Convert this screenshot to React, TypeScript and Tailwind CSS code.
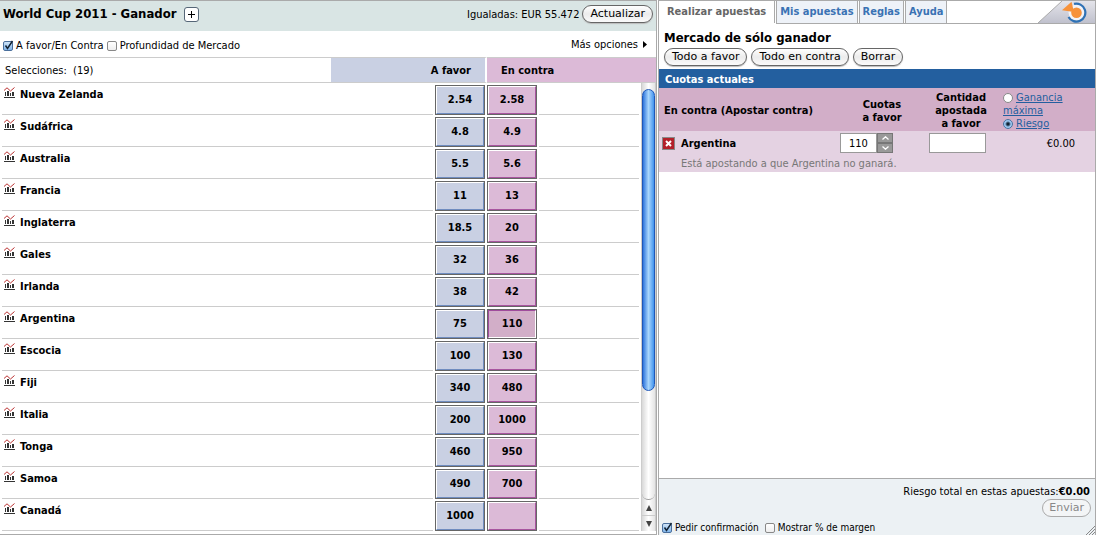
import { useState } from 'react';
import type { ReactNode } from 'react';
import clsx from 'clsx';

type Selection = { name: string; back: string; lay: string };

const selections: Selection[] = [
  { name: 'Nueva Zelanda', back: '2.54', lay: '2.58' },
  { name: 'Sudáfrica', back: '4.8', lay: '4.9' },
  { name: 'Australia', back: '5.5', lay: '5.6' },
  { name: 'Francia', back: '11', lay: '13' },
  { name: 'Inglaterra', back: '18.5', lay: '20' },
  { name: 'Gales', back: '32', lay: '36' },
  { name: 'Irlanda', back: '38', lay: '42' },
  { name: 'Argentina', back: '75', lay: '110' },
  { name: 'Escocia', back: '100', lay: '130' },
  { name: 'Fiji', back: '340', lay: '480' },
  { name: 'Italia', back: '200', lay: '1000' },
  { name: 'Tonga', back: '460', lay: '950' },
  { name: 'Samoa', back: '490', lay: '700' },
  { name: 'Canadá', back: '1000', lay: '' },
];

const tabs = ['Realizar apuestas', 'Mis apuestas', 'Reglas', 'Ayuda'];

function ChartIcon() {
  return (
    <svg width="12" height="12" viewBox="0 0 12 12" className="shrink-0" shapeRendering="crispEdges">
      <path d="M0 10h11v1H0zM1 5h1v4H1zM3 4h2v5H3zM6 6h1v3H6zM8 5h2v4H8z" fill="#333" />
      <path d="M0 3.500L3 .8L6.500 4L10.500 .5" stroke="#b33" fill="none" shapeRendering="auto" />
    </svg>
  );
}

function BrandCorner() {
  return (
    <svg width="57" height="22" viewBox="0 0 57 22" className="ml-auto shrink-0">
      <defs>
        <linearGradient id="corner" x1="0" y1="0" x2="0" y2="1">
          <stop offset="0" stopColor="#e4e4ea" />
          <stop offset="1" stopColor="#c0c1cd" />
        </linearGradient>
      </defs>
      <path d="M0 22L24 0H57V22Z" fill="url(#corner)" />
      <path d="M0 22L24 0" stroke="#aaa" />
      <circle cx="38.500" cy="11.500" r="8" fill="#f2f3f7" />
      <path d="M36 2.900A9 9 0 1 1 30.500 16" fill="none" stroke="#2f72b5" strokeWidth="2.200" />
      <circle cx="38.500" cy="11.700" r="5.300" fill="#f7923a" />
      <path d="M24 9.300L33.500 .8L36 11Z" fill="#f7923a" />
    </svg>
  );
}

function PillButton({ children, disabled }: { children: ReactNode; disabled?: boolean }) {
  return (
    <button
      disabled={disabled}
      className={clsx(
        "h-[18px] rounded-full border font-['DejaVu_Sans',sans-serif] text-[11px] leading-4",
        disabled
          ? 'border-[#aaa] bg-[#f3f5f6] px-[6px] text-[#888]'
          : 'border-[#666] bg-linear-to-b from-white via-[#ececec] to-[#fafafa] px-[7px] text-black shadow-[0_1px_1px_#bbb]',
      )}
    >
      {children}
    </button>
  );
}

function Check({ label, defaultChecked }: { label: string; defaultChecked?: boolean }) {
  return (
    <label className="flex items-center gap-[3px]">
      <span className="grid">
        <input
          type="checkbox"
          defaultChecked={defaultChecked}
          className="peer col-start-1 row-start-1 size-[10px] appearance-none rounded-[2px] border border-[#888] bg-linear-to-b from-white to-[#eee] checked:border-[#4a6f9c] checked:from-[#cfe4f7] checked:to-[#7fb4ea]"
        />
        <svg
          width="10"
          height="10"
          viewBox="0 0 10 10"
          className="pointer-events-none invisible col-start-1 row-start-1 overflow-visible peer-checked:visible"
        >
          <path d="M2.500 4.500L4.500 7.500L9.500 0" stroke="#123" strokeWidth="1.500" fill="none" />
        </svg>
      </span>
      {label}
    </label>
  );
}

function OddsButton({ value, side, selected }: { value: string; side: 'back' | 'lay'; selected?: boolean }) {
  return (
    <button
      aria-label={value ? undefined : 'Sin cuota'}
      className="block h-[30px] w-[50px] border border-[#666] bg-white font-bold"
    >
      <span
        className={clsx(
          'flex size-full items-center justify-center border',
          side === 'back' && 'border-t-white border-r-[#6f8cbf] border-b-[#6f8cbf] border-l-white bg-[#c9d0e3]',
          side === 'lay' && !selected && 'border-t-white border-r-[#a8559f] border-b-[#a8559f] border-l-white bg-[#dcbad7]',
          selected && 'border-t-[#a04c9c] border-r-white border-b-white border-l-[#a04c9c] bg-[#d2aec8]',
        )}
      >
        {value}
      </span>
    </button>
  );
}

function ScrollBar() {
  return (
    <div className="flex h-[448px] flex-col border-x border-[#ccc] bg-linear-to-r from-[#d8d8d8] via-white to-[#e4e4e4]">
      <div className="mt-[6px] h-[302px] rounded-full border border-[#1f57b8] bg-linear-to-r from-[#2c74dc] via-[#a9d6fb] to-[#3f93ee]" />
      <div className="grow rounded-b-full border-b border-[#999]" />
      <div className="flex h-[16px] items-center justify-center border-b border-[#ccc]">
        <svg width="6" height="6" viewBox="0 0 6 6"><path d="M3 0L6 6H0z" fill="#444" /></svg>
      </div>
      <div className="flex h-[15px] items-center justify-center">
        <svg width="6" height="6" viewBox="0 0 6 6"><path d="M3 6L6 0H0z" fill="#444" /></svg>
      </div>
    </div>
  );
}

function MarketPanel() {
  return (
    <section className="flex flex-col border-t border-r border-b border-[#aaa]">
      <header className="flex h-[30px] items-center bg-[#d9e5e4] px-[3px] pb-1">
        <h1 className="text-[13px] font-bold">World Cup 2011 - Ganador</h1>
        <button
          aria-label="Añadir"
          className="ml-2 flex size-[15px] items-center justify-center rounded-[3px] border border-[#567] bg-white"
        >
          <svg width="7" height="7" viewBox="0 0 7 7"><path d="M3 0h1v3h3v1H4v3H3V4H0V3h3z" /></svg>
        </button>
        <span className="mr-[3px] ml-auto pt-px">Igualadas: EUR 55.472</span>
        <PillButton>Actualizar</PillButton>
      </header>
      <div className="flex h-[26px] items-center gap-[3px] pt-[3px] pl-[3px]">
        <Check label="A favor/En Contra" defaultChecked />
        <Check label="Profundidad de Mercado" />
        <a href="#opciones" className="mr-[9px] mb-[2px] ml-auto flex items-center gap-[5px]">
          Más opciones
          <svg width="4" height="7" viewBox="0 0 4 7"><path d="M0 0L4 3.500L0 7z" /></svg>
        </a>
      </div>
      <table className="w-full table-fixed border-separate border-spacing-0">
        <colgroup>
          <col />
          <col className="w-[102px]" />
          <col className="w-[54px]" />
          <col className="w-[52px]" />
          <col className="w-[102px]" />
          <col className="w-[15px]" />
        </colgroup>
        <thead>
          <tr className="h-[26px]">
            <th className="border-y border-[#ccc] p-0 pt-px pl-[5px] text-left font-normal whitespace-pre">Selecciones:  (19)</th>
            <th colSpan={2} className="border-y border-r-2 border-y-[#ccc] border-r-white bg-[#c9d0e3] p-0 pt-px pr-[14px] text-right">
              A favor
            </th>
            <th colSpan={3} className="border-y border-[#ccc] bg-[#dcbad7] p-0 pt-px pl-[14px] text-left">En contra</th>
          </tr>
        </thead>
        <tbody>
          {selections.map((s, i) => (
            <tr key={s.name} className="h-8">
              <td colSpan={2} className="p-0 pl-[2px]">
                <div className="flex h-8 items-start gap-1 border-b border-[#ccc] pt-1 pl-[2px]">
                  <ChartIcon />
                  <a href="#grafico" className="pt-px font-bold">{s.name}</a>
                </div>
              </td>
              <td className="p-0 pt-[2px] pl-[2px]"><OddsButton value={s.back} side="back" /></td>
              <td className="p-0 pt-[2px]"><OddsButton value={s.lay} side="lay" selected={s.name === 'Argentina'} /></td>
              <td className="p-0 pr-[2px]"><div className="h-8 border-b border-[#ccc]" /></td>
              {i === 0 && <td rowSpan={selections.length} className="p-0"><ScrollBar /></td>}
            </tr>
          ))}
        </tbody>
      </table>
    </section>
  );
}

function BetSlip() {
  const [active, setActive] = useState(tabs[0]);

  return (
    <section className="flex flex-col border-t border-r border-l border-[#aaa]">
      <nav className="flex h-[23px] shrink-0">
        {tabs.map((tab) => (
          <div key={tab} className="flex border-b border-[#aaa] pr-px has-[[aria-current=page]]:border-white">
            <button
              onClick={() => setActive(tab)}
              aria-current={active === tab ? 'page' : undefined}
              className={clsx(
                'border-r border-[#aaa] font-bold',
                active === tab ? 'bg-white px-2 text-[#666]' : 'border-l bg-[#eef2f8] px-[3px] text-[#3a72b4]',
              )}
            >
              {tab}
            </button>
          </div>
        ))}
        <div className="flex grow border-b border-[#aaa]">
          <BrandCorner />
        </div>
      </nav>
      <h2 className="mt-[5px] pl-[5px] text-[13px] leading-[18px] font-bold">Mercado de sólo ganador</h2>
      <div className="mt-px mb-[3px] flex gap-1 pl-[5px]">
        <PillButton>Todo a favor</PillButton>
        <PillButton>Todo en contra</PillButton>
        <PillButton>Borrar</PillButton>
      </div>
      <h3 className="h-[19px] bg-[#235f9f] pl-[6px] leading-[22px] font-bold text-white">Cuotas actuales</h3>
      <table className="w-full table-fixed border-collapse">
        <colgroup>
          <col />
          <col className="w-[94px]" />
          <col className="w-[64px]" />
          <col className="w-[102px]" />
        </colgroup>
        <thead className="bg-[#d2aec8] leading-[13px]">
          <tr className="h-[43px]">
            <th className="p-0 pt-[2px] pl-[5px] text-left">En contra (Apostar contra)</th>
            <th className="p-0 pt-[2px]">Cuotas<br />a favor</th>
            <th className="p-0 pt-[2px]">Cantidad<br />apostada<br />a favor</th>
            <th className="p-0 pt-[2px] pl-[10px] text-left font-normal text-[#235f9f]">
              {['Ganancia máxima', 'Riesgo'].map((option) => (
                <label key={option} className="block">
                  <input
                    type="radio"
                    name="mode"
                    defaultChecked={option === 'Riesgo'}
                    className="mr-[3px] size-[10px] appearance-none rounded-full border border-[#888] bg-white align-[-2px] checked:border-[#4a6f9c] checked:bg-[radial-gradient(circle,#123_1px,#9cc8f2_3px)]"
                  />
                  <span className="underline">{option}</span>
                </label>
              ))}
            </th>
          </tr>
        </thead>
        <tbody className="bg-[#e4d2e2]">
          <tr className="h-[24px]">
            <td className="p-0 pl-[3px]">
              <div className="flex items-center gap-[6px]">
                <button aria-label="Quitar" className="flex size-[13px] items-center justify-center border border-[#888] bg-[#b3202a]">
                  <svg width="7" height="7" viewBox="0 0 7 7"><path d="M1 1L6 6M6 1L1 6" stroke="#fff" strokeWidth="2" /></svg>
                </button>
                <span className="pt-px font-bold">Argentina</span>
              </div>
            </td>
            <td className="p-0 pl-[5px]">
              <div className="flex">
                <input aria-label="Cuotas a favor" defaultValue="110" className="h-[20px] w-[37px] border border-[#999] bg-white pl-2" />
                <div className="flex flex-col">
                  <button aria-label="Subir" className="flex h-[10px] w-[16px] items-center justify-center border border-[#777] bg-[#999]">
                    <svg width="7" height="4" viewBox="0 0 7 4"><path d="M.5 3.500L3.500 .8L6.500 3.500" stroke="#fff" strokeWidth="1.300" fill="none" /></svg>
                  </button>
                  <button aria-label="Bajar" className="flex h-[10px] w-[16px] items-center justify-center border border-[#777] bg-[#999]">
                    <svg width="7" height="4" viewBox="0 0 7 4"><path d="M.5 .5L3.500 3.200L6.500 .5" stroke="#fff" strokeWidth="1.300" fill="none" /></svg>
                  </button>
                </div>
              </div>
            </td>
            <td className="p-0">
              <input aria-label="Cantidad apostada a favor" className="block h-[20px] w-[57px] border border-[#999] bg-white px-1" />
            </td>
            <td className="p-0 pt-px pr-[20px] text-right">€0.00</td>
          </tr>
          <tr className="h-[17px]">
            <td colSpan={4} className="p-0 pt-px pl-[22px] text-[#777]">Está apostando a que Argentina no ganará.</td>
          </tr>
        </tbody>
      </table>
      <footer className="mt-auto border-t border-[#aaa] bg-[#ecf1f4] pt-[6px]">
        <p className="pr-[5px] text-right">Riesgo total en estas apuestas:<b>€0.00</b></p>
        <div className="flex justify-end pr-[4px]">
          <PillButton disabled>Enviar</PillButton>
        </div>
        <div className="flex h-[18px] items-end gap-[6px] pl-[3px] text-[10px]">
          <Check label="Pedir confirmación" defaultChecked />
          <Check label="Mostrar % de margen" />
          <svg width="9" height="9" viewBox="0 0 9 9" className="ml-auto"><path d="M0 9L9 0M3 9L9 3M6 9L9 6" stroke="#888" /></svg>
        </div>
      </footer>
    </section>
  );
}

export default function App() {
  return (
    <main className="grid min-h-screen grid-cols-[3fr_2fr] gap-px bg-white pr-px font-['DejaVu_Sans_Condensed','DejaVu_Sans',sans-serif] text-[11px] leading-[14px] text-black">
      <MarketPanel />
      <BetSlip />
    </main>
  );
}
